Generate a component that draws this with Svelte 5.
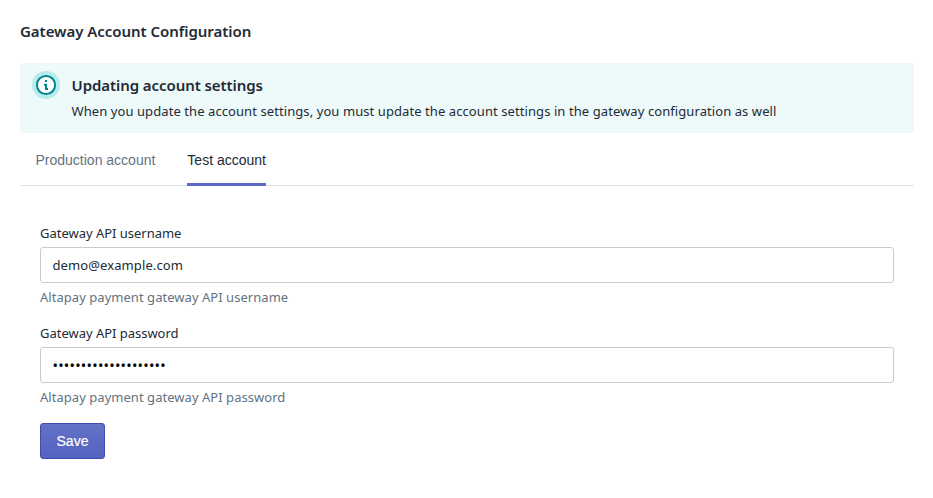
<script>
  let active = $state('test');
  let username = $state('demo@example.com');
  let password = $state('examplepassword12345');
  const tabs = [
    { id: 'production', label: 'Production account' },
    { id: 'test', label: 'Test account' }
  ];
</script>

<main>
  <h1>Gateway Account Configuration</h1>

  <section class="banner">
    <svg class="info" width="28" height="28" viewBox="0 0 28 28" aria-hidden="true">
      <circle cx="14" cy="14" r="14" fill="#b7ecec" />
      <circle cx="14" cy="14" r="9.1" fill="#fff" stroke="#00848e" stroke-width="2" />
      <path d="M13 9h2v2h-2zM12 12.7h3v4.3h1v2h-3v-4.3h-1z" fill="#00848e" />
    </svg>
    <div>
      <h2>Updating account settings</h2>
      <p>When you update the account settings, you must update the account settings in the gateway configuration as well</p>
    </div>
  </section>

  <div class="tabs" role="tablist">
    {#each tabs as tab}
      <button role="tab" aria-selected={active === tab.id} class:active={active === tab.id} onclick={() => (active = tab.id)}>{tab.label}</button>
    {/each}
  </div>

  <form onsubmit={(e) => e.preventDefault()}>
    <div class="field">
      <label for="username">Gateway API username</label>
      <input id="username" type="text" bind:value={username} />
      <small>Altapay payment gateway API username</small>
    </div>
    <div class="field">
      <label for="password">Gateway API password</label>
      <input id="password" type="password" bind:value={password} />
      <small>Altapay payment gateway API password</small>
    </div>
    <button class="save" type="submit">Save</button>
  </form>
</main>

<style>
  :global(body) { margin: 0; background: #fff; }
  * { box-sizing: border-box; }
  main {
    height: 498px;
    padding: 19px 19px 0 20px;
    color: #212b36;
    font: 13px/20px "Segoe UI", "Noto Sans", sans-serif;
    letter-spacing: 0.08px;
  }
  h1, h2, p { margin: 0; }
  h1 { font-size: 15px; line-height: 24px; font-weight: 600; letter-spacing: -0.04px; }
  .banner {
    display: flex;
    gap: 11.5px;
    height: 70px;
    margin-top: 20px;
    padding: 8px 12px;
    border-radius: 3px;
    background: #eef9f9;
  }
  .info { flex: none; }
  h2 { font-size: 15px; line-height: 24px; font-weight: 600; margin-top: 2px; letter-spacing: -0.07px; }
  p { margin-top: 4px; }
  .tabs { display: flex; height: 53px; padding: 0 15.5px; gap: 32px; border-bottom: 1px solid #dfe3e8; }
  .tabs button {
    height: 53px;
    padding: 3px 0 0;
    border: 0;
    border-bottom: 3px solid transparent;
    background: none;
    color: #637381;
    font: 14px/20px "Liberation Sans", Arial, sans-serif;
    letter-spacing: 0;
  }
  .tabs .active { color: #212b36; border-color: #5c6ac4; }
  form { padding: 37px 20px 0; }
  .field { height: 100px; }
  label { display: block; line-height: 20px; letter-spacing: -0.02px; }
  input {
    display: block;
    width: 100%;
    height: 36px;
    margin: 4px 0;
    padding: 0 11.5px;
    border: 1px solid #c4cdd5;
    border-radius: 3px;
    background: #fff;
    color: #212b36;
    font: inherit;
    letter-spacing: 0.1px;
    outline: 0;
  }
  input[type='password'] { color: #000; font-size: 14.5px; letter-spacing: 0.22px; }
  small { display: block; font-size: inherit; color: #637381; letter-spacing: 0.04px; }
  .save {
    display: block;
    width: 65px;
    height: 36px;
    padding: 0;
    border: 1px solid #3f4eae;
    border-radius: 3px;
    background: linear-gradient(#6371c7, #5563c1);
    box-shadow: inset 0 1px 0 #6774c8;
    color: #fff;
    font: 14px/20px "Liberation Sans", Arial, sans-serif;
    letter-spacing: 0;
    -webkit-text-stroke: 0.2px #fff;
  }
</style>
